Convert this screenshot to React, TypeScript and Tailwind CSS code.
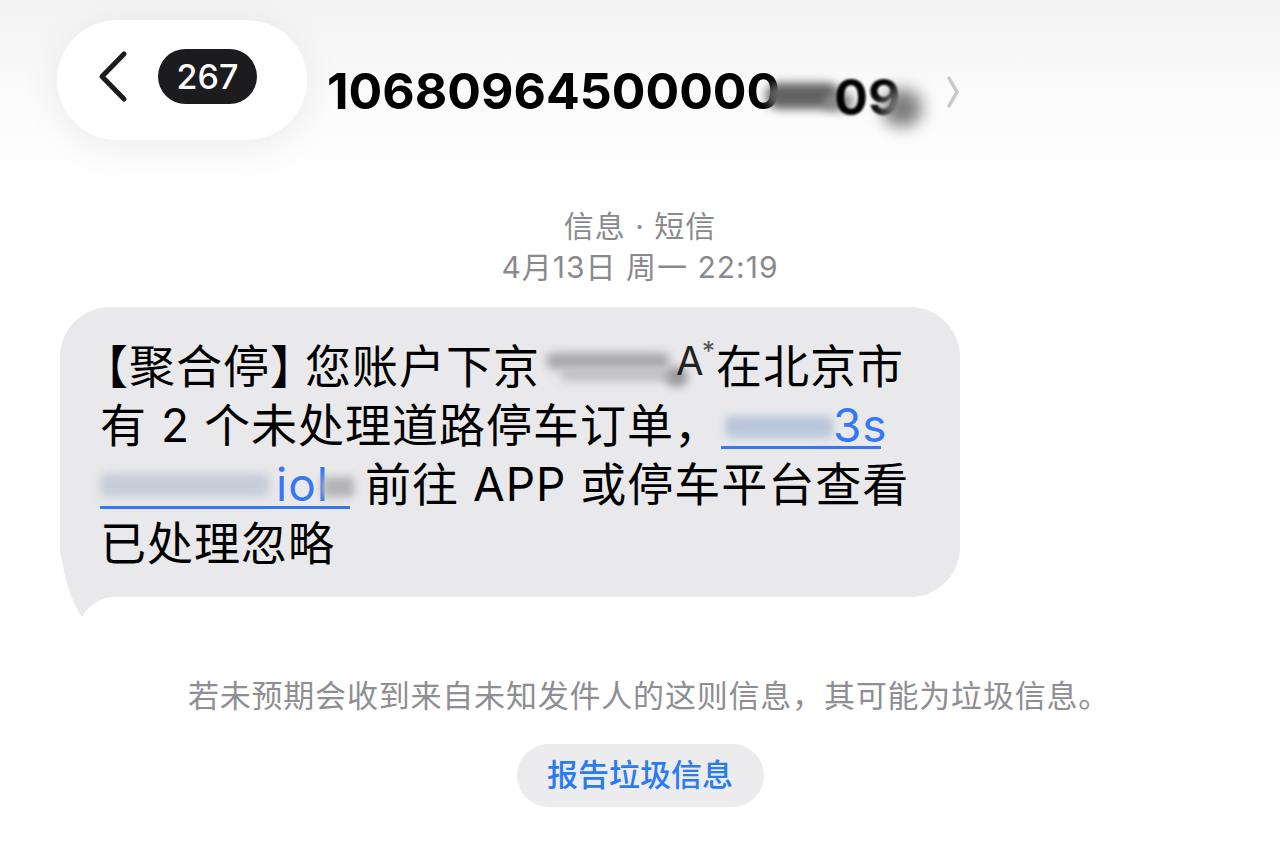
import React from "react";

const sans = "font-['Inter','Noto_Sans_CJK_SC',sans-serif]";

function BackChevron() {
  return (
    <svg width="31" height="53" viewBox="0 0 31 53" fill="none">
      <path d="M27 4 L5 26.5 L27 49" stroke="#1c1c1e" strokeWidth="5" strokeLinecap="round" strokeLinejoin="round" />
    </svg>
  );
}

function Header() {
  return (
    <div className="flex h-[200px] items-start bg-gradient-to-b from-[#f3f3f3] via-[#fbfbfb] to-white pl-[57px] pt-[20px]">
      {/* back button pill */}
      <div className="flex h-[120px] w-[250px] items-center rounded-[60px] bg-white pb-[7px] pl-[40px] shadow-[0_6px_40px_rgba(0,0,0,0.07)]">
        <BackChevron />
        <span className="ml-[30px] flex h-[55px] w-[99px] items-center justify-center rounded-full bg-[#1c1c1e] text-[34px] font-medium text-white">
          267
        </span>
      </div>

      {/* sender number, partly smudged */}
      <div className="ml-[20px] mt-[41px] flex text-[50px] font-bold leading-[60px] text-black">
        <span>10680964500000</span>
        <span className="relative ml-[-16px] inline-block h-[60px] w-[200px]">
          <span className="absolute left-[2px] top-[22px] h-[26px] w-[74px] rounded-full bg-[#626262] blur-[5px]" />
          <span className="absolute left-[60px] top-[32px] h-[18px] w-[30px] rounded-full bg-[#8a8a8a] blur-[5px]" />
          <span className="absolute left-[70px] top-[6px] blur-[1px]">09</span>
          <span className="absolute left-[118px] top-[28px] h-[38px] w-[40px] rounded-full bg-[#7d7d7d] blur-[8px]" />
          <svg className="absolute left-[182px] top-[14px]" width="14" height="34" viewBox="0 0 14 34" fill="none">
            <path d="M3 3 L11 17 L3 31" stroke="#c7c7cc" strokeWidth="3.5" strokeLinecap="round" strokeLinejoin="round" />
          </svg>
        </span>
      </div>
    </div>
  );
}

function Bubble() {
  return (
    <div className="relative ml-[60px] mt-[19px] h-[290px] w-[900px] rounded-[50px] bg-[#e9e9eb] pl-[40px] pt-[30px] text-[46px] leading-[59px] tracking-[1px] text-black">
      <svg className="absolute left-0 top-[200px]" width="90" height="115" viewBox="0 0 90 115">
        <path d="M0 0 L0 24 C0 62 10 92 22 110 C28 100 36 93 50 90 L90 90 L90 0 Z" fill="#e9e9eb" />
      </svg>

      <div className="relative ml-[-18px] whitespace-nowrap">
        【聚合停<span className="mr-[-12px]">】</span>您账户下京
        <span className="relative inline-block h-[59px] w-[176px] align-top">
          <span className="absolute left-[6px] top-[16px] h-[16px] w-[124px] rounded-full bg-[#a5a5a8] blur-[5px]" />
          <span className="absolute left-[20px] top-[32px] h-[12px] w-[116px] rounded-full bg-[#bdbdc0] blur-[5px]" />
          <span className="absolute left-[126px] top-[30px] h-[20px] w-[22px] rounded-full bg-[#9b9b9e] blur-[4px]" />
          <span className="absolute left-[136px] top-[-6px] text-[40px] text-[#222]">A</span>
          <span className="absolute left-[162px] top-[-16px] text-[26px] text-[#555]">*</span>
        </span>
        在北京市
      </div>

      <div className="relative whitespace-nowrap">
        有 2 个未处理道路停车订单，
        <span className="relative inline-block h-[59px] w-[165px] align-top">
          <span className="absolute left-[4px] top-[20px] h-[22px] w-[108px] rounded-[6px] bg-[#b9c6db] blur-[4px]" />
          <span className="absolute left-[112px] top-0 text-[#3478f6]">3s</span>
          <span className="absolute bottom-[6px] left-0 h-[3px] w-[160px] bg-[#3478f6] blur-[0.5px]" />
        </span>
      </div>

      <div className="relative whitespace-nowrap">
        <span className="relative inline-block h-[59px] w-[252px] align-top">
          <span className="absolute left-0 top-[18px] h-[24px] w-[170px] rounded-[6px] bg-[#c6cdd9] blur-[5px]" />
          <span className="absolute left-[176px] top-0 text-[#3478f6]">iol</span>
          <span className="absolute left-[222px] top-[22px] h-[20px] w-[32px] bg-[#b3b3b6] blur-[4px]" />
          <span className="absolute bottom-[5px] left-0 h-[3px] w-[250px] bg-[#3478f6] blur-[0.5px]" />
        </span>
        <span className="ml-[13px]">前往 APP 或停车平台查看</span>
      </div>

      <div className="relative">已处理忽略</div>
    </div>
  );
}

export default function App() {
  return (
    <div className={`relative h-[857px] w-[1280px] overflow-hidden bg-white ${sans}`}>
      <Header />

      <div className="mt-[6px] text-center text-[30px] leading-[41px] tracking-[1px] text-[#8a8a8e]">
        <div>信息 · 短信</div>
        <div>4月13日 周一 22:19</div>
      </div>

      <Bubble />

      <p className="mt-[79px] pl-[18px] text-center text-[31px] leading-[40px] tracking-[0.8px] text-[#8e8e93]">
        若未预期会收到来自未知发件人的这则信息，其可能为垃圾信息。
      </p>

      <div className="mt-[28px] flex justify-center">
        <button className="h-[63px] w-[247px] rounded-full bg-[#ececee] text-[31px] font-medium text-[#2a7bf0]">
          报告垃圾信息
        </button>
      </div>
    </div>
  );
}
